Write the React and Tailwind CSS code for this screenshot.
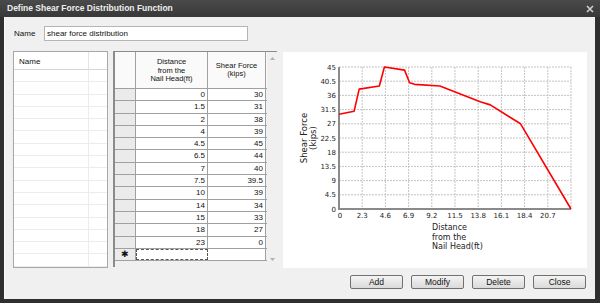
import React from "react";

const rows = [
  ["0", "30"], ["1.5", "31"], ["2", "38"], ["4", "39"], ["4.5", "45"], ["6.5", "44"], ["7", "40"],
  ["7.5", "39.5"], ["10", "39"], ["14", "34"], ["15", "33"], ["18", "27"], ["23", "0"],
];

const yTicks = ["0", "4.5", "9", "13.5", "18", "22.5", "27", "31.5", "36", "40.5", "45"];
const xTicks = ["0", "2.3", "4.6", "6.9", "9.2", "11.5", "13.8", "16.1", "18.4", "20.7"];

// plot area inside the white chart panel
const PX = 56, PY = 15, PW = 232, PH = 142;
const sx = (v) => PX + (v * PW) / 23;
const sy = (v) => PY + PH - (v * PH) / 45;

function Chart() {
  const pts = rows.map(([d, f]) => `${sx(+d)},${sy(+f)}`).join(" ");
  return (
    <svg width="304" height="216" className="block">
      {yTicks.map((t, i) => {
        const y = PY + PH - (i * PH) / 10;
        return (
          <g key={t}>
            {i > 0 && <line x1={PX} x2={PX + PW} y1={y} y2={y} stroke="#c4c4c4" strokeDasharray="2 1" />}
            <text x={PX - 3} y={y + 2.5} fontSize="7" textAnchor="end" fill="#222" fontFamily="DejaVu Sans">{t}</text>
          </g>
        );
      })}
      {xTicks.map((t, i) => {
        const x = PX + (i * PW) / 10;
        return (
          <g key={t}>
            {i > 0 && <line x1={x} x2={x} y1={PY} y2={PY + PH} stroke="#c4c4c4" strokeDasharray="2 1" />}
            <text x={i === 0 ? x + 1 : x} y={PY + PH + 9} fontSize="7" textAnchor="middle" fill="#222" fontFamily="DejaVu Sans">{t}</text>
          </g>
        );
      })}
      <line x1={PX + PW} x2={PX + PW} y1={PY} y2={PY + PH} stroke="#c4c4c4" strokeDasharray="2 1" />
      <line x1={PX} x2={PX} y1={PY} y2={PY + PH + 1} stroke="#8a8a8a" strokeWidth="2" />
      <line x1={PX - 1} x2={PX + PW} y1={PY + PH} y2={PY + PH} stroke="#8a8a8a" strokeWidth="2" />
      <polyline points={pts} fill="none" stroke="#ff0000" strokeWidth="1.6" strokeLinejoin="round" />
      <text transform="translate(24 86) rotate(-90)" fontSize="8.5" textAnchor="middle" fill="#222" fontFamily="DejaVu Sans">
        <tspan x="0" y="0">Shear Force</tspan>
        <tspan x="0" y="9">(kips)</tspan>
      </text>
      <text fontSize="8" fill="#222" fontFamily="DejaVu Sans">
        <tspan x="149" y="178">Distance</tspan>
        <tspan x="149" y="187.5">from the</tspan>
        <tspan x="149" y="197">Nail Head(ft)</tspan>
      </text>
    </svg>
  );
}

function Btn({ children }) {
  return (
    <button className="w-[53px] h-[14px] border border-[#707070] rounded-[2px] bg-gradient-to-b from-[#f4f4f4] to-[#dadada] text-[8.5px] leading-none text-[#111]">
      {children}
    </button>
  );
}

export default function App() {
  return (
    <div className="w-[600px] h-[303px] bg-[#2f2f2f] flex flex-col overflow-hidden font-['Liberation_Sans',sans-serif] text-[8px] text-[#111]">
      {/* title bar */}
      <div className="h-[17px] bg-gradient-to-b from-[#4a4a4a] to-[#383838] flex items-center pl-[7px] pr-[6px]">
        <span className="text-[#eeeeee] font-bold text-[8.5px]">Define Shear Force Distribution Function</span>
        <svg width="8" height="8" className="ml-auto" viewBox="0 0 8 8">
          <path d="M1 1L7 7M7 1L1 7" stroke="#cfcfcf" strokeWidth="1.6" />
        </svg>
      </div>

      <div className="ml-[4px] mr-[5px] h-[282px] bg-[#f0f0f0] border-l border-[#fafafa] flex flex-col">
        {/* name row */}
        <div className="flex items-center mt-[9px] pl-[9px]">
          <span className="w-[30px]">Name</span>
          <div className="w-[204px] h-[15px] bg-white border border-[#b5b5b5] flex items-center pl-[2px]">
            shear force distribution
          </div>
        </div>

        {/* main row */}
        <div className="flex mt-[10px] h-[217px] pl-[8px]">
          {/* list */}
          <div className="w-[95px] h-[217px] bg-white border border-[#a8a8a8] flex flex-col overflow-hidden">
            <div className="h-[18px] flex border-b border-[#d6d6d6] shrink-0">
              <div className="w-[75px] pl-[5px] pt-[4px] border-r border-[#e4e4e4]">Name</div>
            </div>
            {Array.from({ length: 16 }).map((_, i) => (
              <div key={i} className="h-[12.3px] shrink-0 flex border-b border-[#ececec]">
                <div className="w-[75px] border-r border-[#ececec]" />
              </div>
            ))}
          </div>

          {/* data grid */}
          <div className="ml-[5px] w-[164px] h-[216px] flex border-l-2 border-t border-[#8c8c8c] bg-[#f0f0f0]">
            <div className="w-[152px] flex flex-col">
              <div className="h-[37px] flex bg-[#fafafa] border-b border-[#a0a0a0] shrink-0">
                <div className="w-[21px] border-r border-[#a0a0a0]" />
                <div className="w-[72px] border-r border-[#a0a0a0] flex items-center justify-center text-center leading-[8.6px] text-[7.5px] pt-[2px]">
                  Distance<br />from the<br />Nail Head(ft)
                </div>
                <div className="w-[58px] border-r border-[#a0a0a0] flex items-center justify-center text-center leading-[8px] text-[7.5px]">
                  Shear Force<br />(kips)
                </div>
              </div>
              {rows.map(([d, f]) => (
                <div key={d} className="h-[12.3px] flex shrink-0 border-b border-[#a0a0a0]">
                  <div className="w-[21px] bg-[#ebebeb] border-r border-[#a0a0a0]" />
                  <div className="w-[72px] bg-white border-r border-[#a0a0a0] text-right pr-[2px] leading-[11px]">{d}</div>
                  <div className="w-[58px] bg-white border-r border-[#a0a0a0] text-right pr-[2px] leading-[11px]">{f}</div>
                </div>
              ))}
              <div className="h-[12.3px] flex shrink-0 border-b border-[#a0a0a0]">
                <div className="w-[21px] bg-[#ebebeb] border-r border-[#a0a0a0] flex items-center justify-center text-[9px] leading-none">✱</div>
                <div className="w-[72px] bg-white border border-dashed border-[#555]" />
                <div className="w-[58px] bg-white border-r border-[#a0a0a0]" />
              </div>
            </div>
            <div className="flex-1 flex flex-col items-center justify-between pt-[5px] pb-[6px]">
              <svg width="5" height="3" viewBox="0 0 5 3"><path d="M0 3L2.5 0L5 3Z" fill="#b0b0b0" /></svg>
              <svg width="5" height="3" viewBox="0 0 5 3"><path d="M0 0L2.5 3L5 0Z" fill="#b0b0b0" /></svg>
            </div>
          </div>

          {/* chart */}
          <div className="ml-[6px] mt-[1px] w-[304px] h-[216px] bg-white">
            <Chart />
          </div>
        </div>

        {/* buttons */}
        <div className="flex justify-end gap-[8px] mt-[7px] pr-[9px]">
          <Btn>Add</Btn>
          <Btn>Modify</Btn>
          <Btn>Delete</Btn>
          <Btn>Close</Btn>
        </div>
      </div>
    </div>
  );
}
